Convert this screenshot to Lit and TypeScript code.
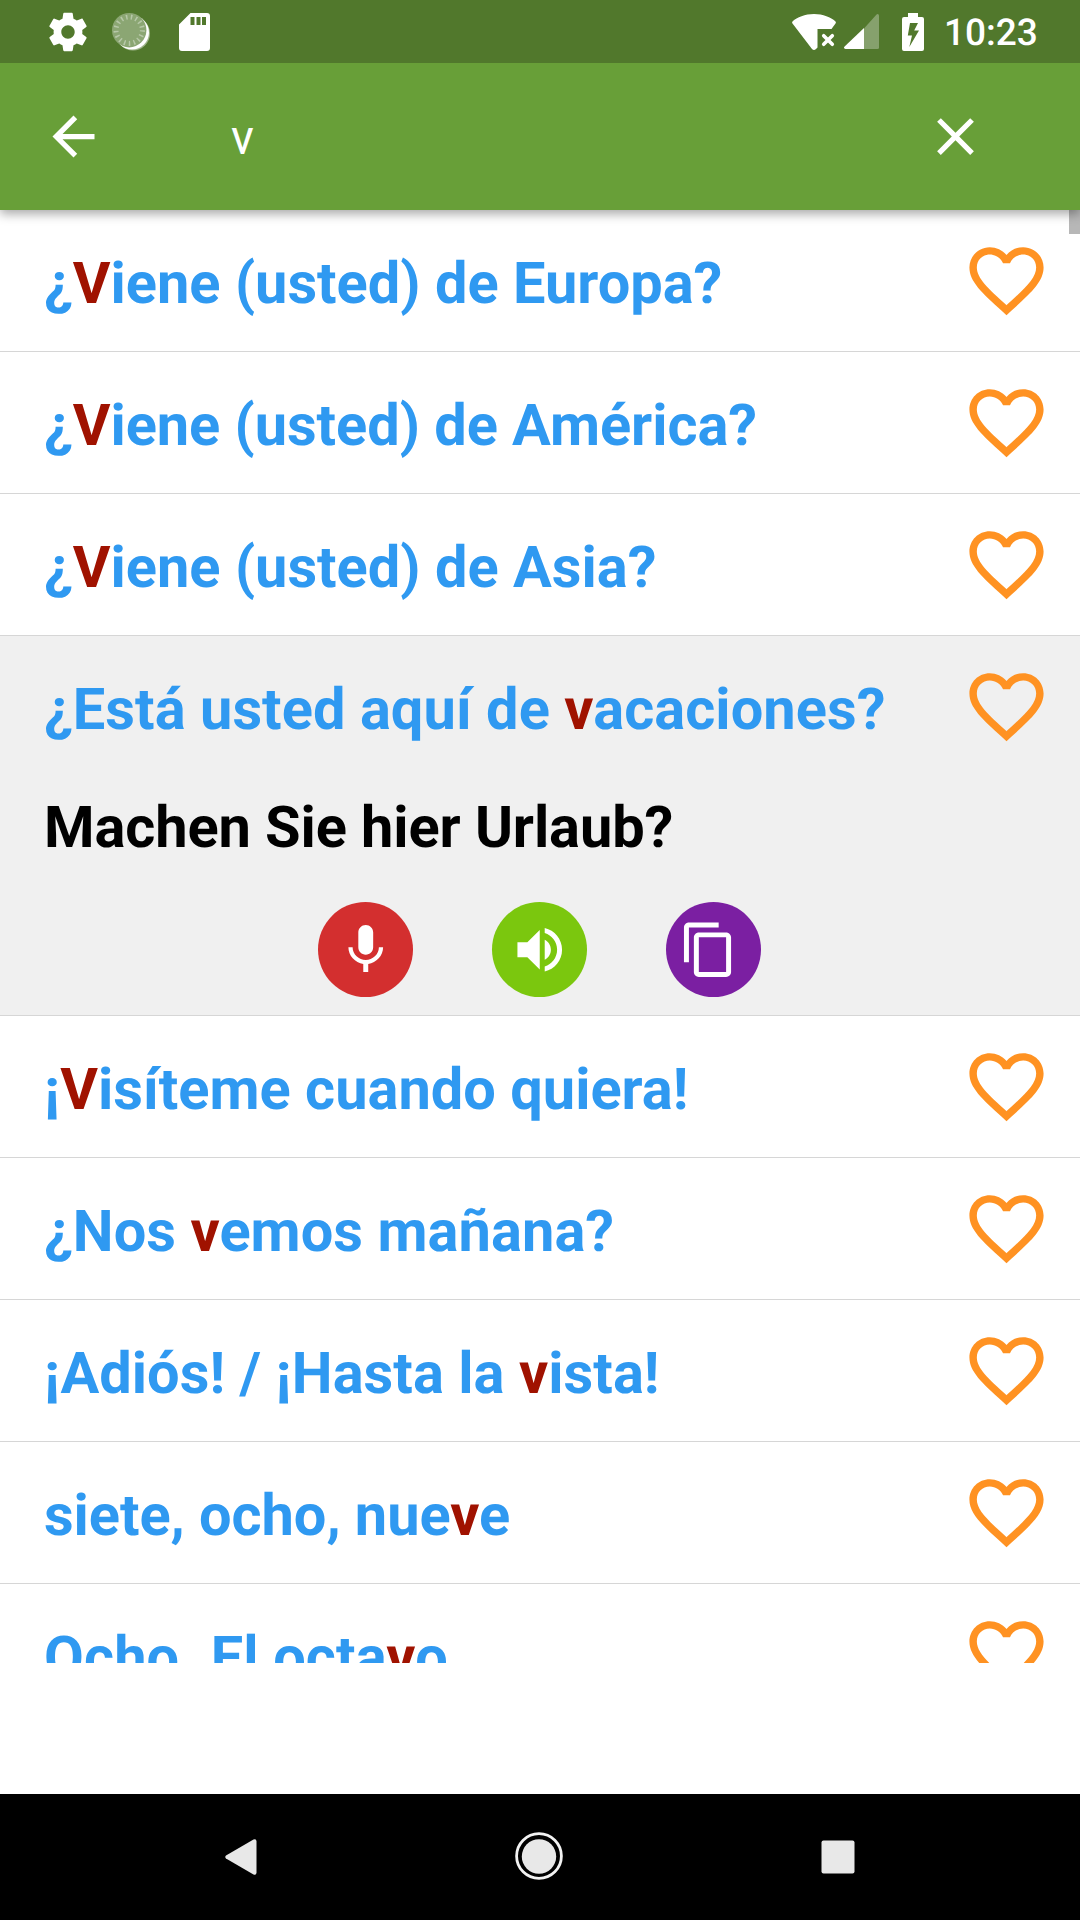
import { LitElement, html, svg, css, nothing } from "lit";
import { customElement, property, state } from "lit/decorators.js";
import { styleMap } from "lit/directives/style-map.js";

interface Phrase {
  text: string;
  translation?: string;
  /** Letter spacing in px for the phrase and for its translation. */
  tracking?: number;
  translationTracking?: number;
}

const PHRASES: Phrase[] = [
  { text: "¿Viene (usted) de Europa?" },
  { text: "¿Viene (usted) de América?", tracking: -0.05 },
  { text: "¿Viene (usted) de Asia?" },
  {
    text: "¿Está usted aquí de vacaciones?",
    tracking: 0.05,
    translation: "Machen Sie hier Urlaub?",
    translationTracking: -0.1,
  },
  { text: "¡Visíteme cuando quiera!" },
  { text: "¿Nos vemos mañana?", tracking: 0.06 },
  { text: "¡Adiós! / ¡Hasta la vista!", tracking: 0.05 },
  { text: "siete, ocho, nueve", tracking: -0.06 },
  { text: "Ocho. El octavo.", tracking: 0.12 },
];

const ICONS: Record<string, string> = {
  back: "M20 11H7.83l5.59-5.59L12 4l-8 8 8 8 1.41-1.41L7.83 13H20v-2z",
  close: "M19 6.41L17.59 5 12 10.59 6.41 5 5 6.41 10.59 12 5 17.59 6.41 19 12 13.41 17.59 19 19 17.59 13.41 12z",
  heart:
    "M16.5 3c-1.74 0-3.41.81-4.5 2.09C10.91 3.81 9.24 3 7.5 3 4.42 3 2 5.42 2 8.5c0 3.78 3.4 6.86 8.55 11.54L12 21.35l1.45-1.32C18.6 15.36 22 12.28 22 8.5 22 5.42 19.58 3 16.5 3zm-4.4 15.55l-.1.1-.11-.1C7.14 14.24 4 11.39 4 8.5 4 6.5 5.5 5 7.5 5c1.54 0 3.04.99 3.57 2.36h1.87C13.46 5.99 14.96 5 16.5 5c2 0 3.5 1.5 3.5 3.5 0 2.89-3.14 5.74-7.9 10.05z",
  mic: "M12 14c1.66 0 2.99-1.34 2.99-3L15 5c0-1.66-1.34-3-3-3S9 3.34 9 5v6c0 1.66 1.34 3 3 3zm5.3-3c0 3-2.54 5.1-5.3 5.1S6.7 14 6.7 11H5c0 3.41 2.72 6.23 6 6.72V21h2v-3.28c3.28-.48 6-3.3 6-6.72h-1.7z",
  speaker:
    "M3 9v6h4l5 5V4L7 9H3zm13.5 3c0-1.77-1.02-3.29-2.5-4.03v8.05c1.48-.73 2.5-2.25 2.5-4.02zM14 3.23v2.06c2.89.86 5 3.54 5 6.71s-2.11 5.85-5 6.71v2.06c4.01-.91 7-4.49 7-8.77s-2.99-7.86-7-8.77z",
  copy: "M16 1H4c-1.1 0-2 .9-2 2v14h2V3h12V1zm3 4H8c-1.1 0-2 .9-2 2v14c0 1.1.9 2 2 2h11c1.1 0 2-.9 2-2V7c0-1.1-.9-2-2-2zm0 16H8V7h11v14z",
  gear: "M19.43 12.98c.04-.32.07-.64.07-.98s-.03-.66-.07-.98l2.11-1.65c.19-.15.24-.42.12-.64l-2-3.46c-.12-.22-.39-.3-.61-.22l-2.49 1c-.52-.4-1.08-.73-1.69-.98l-.38-2.65C14.46 2.18 14.25 2 14 2h-4c-.25 0-.46.18-.49.42l-.38 2.65c-.61.25-1.17.59-1.69.98l-2.49-1c-.23-.09-.49 0-.61.22l-2 3.46c-.13.22-.07.49.12.64l2.11 1.65c-.04.32-.07.65-.07.98s.03.66.07.98l-2.11 1.65c-.19.15-.24.42-.12.64l2 3.46c.12.22.39.3.61.22l2.49-1c.52.4 1.08.73 1.69.98l.38 2.65c.03.24.24.42.49.42h4c.25 0 .46-.18.49-.42l.38-2.65c.61-.25 1.17-.59 1.69-.98l2.49 1c.23.09.49 0 .61-.22l2-3.46c.12-.22.07-.49-.12-.64l-2.11-1.65zM12 15.5c-1.93 0-3.5-1.57-3.5-3.5s1.57-3.5 3.5-3.5 3.5 1.57 3.5 3.5-1.57 3.5-3.5 3.5z",
};

const icon = (name: string) =>
  svg`<svg class="icon ${name}" viewBox="0 0 24 24"><path d=${ICONS[name]} /></svg>`;

const tracked = (px = 0) => styleMap({ letterSpacing: `${px}px` });

@customElement("status-bar")
export class StatusBar extends LitElement {
  static styles = css`
    :host {
      display: flex;
      align-items: center;
      justify-content: space-between;
      height: 63px;
      padding: 0 42px 0 45px;
      box-sizing: border-box;
      background: #51782c;
      color: #fff;
      position: relative;
      z-index: 2;
    }
    .side {
      display: flex;
      align-items: center;
    }
    svg {
      display: block;
      fill: #fff;
    }
    .gear {
      width: 46px;
      height: 46px;
    }
    .sync {
      width: 42px;
      height: 42px;
      margin-left: 19px;
    }
    .ticks {
      fill: none;
      stroke: #b7c8a8;
      stroke-width: 5;
      stroke-dasharray: 1.5 3.38;
    }
    .card {
      width: 31px;
      height: 38px;
      margin-left: 27px;
    }
    .wifi {
      width: 44px;
      height: 36px;
    }
    .signal {
      width: 35px;
      height: 35px;
      margin-left: 8px;
    }
    .battery {
      width: 22px;
      height: 38px;
      margin-left: 23px;
    }
    .time {
      width: 94px;
      margin: 4px 0 0 20px;
      font: 500 37px/44px Roboto, sans-serif;
      text-rendering: geometricPrecision;
    }
  `;

  render() {
    return html`
      <div class="side">
        ${icon("gear")}
        <svg class="sync" viewBox="0 0 42 42">
          <circle cx="23" cy="22.5" r="17" fill="#9fb58a" />
          <circle cx="22" cy="21.5" r="17" />
          <circle cx="19.2" cy="19.2" r="17.2" fill="#8ba673" />
          <circle class="ticks" cx="19.2" cy="19.2" r="13.2" />
        </svg>
        <svg class="card" viewBox="0 0 31 38">
          <path
            fill-rule="evenodd"
            d="M11.5 0H28q3 0 3 3v32q0 3-3 3H3q-3 0-3-3V11.500zM11.500 4v8h4V4zM17.500 4v8h4V4zM23 4v8h4V4z"
          />
        </svg>
      </div>
      <div class="side">
        <svg class="wifi" viewBox="0 0 44 36">
          <path d="M22 0C31 0 39 3.300 43.300 7.200Q44.400 8.400 43.500 9.500L39.500 15H25.500V33.500L24 35Q22 37 20 35L.500 9.500Q-.400 8.400 .700 7.200C5 3.300 13 0 22 0z" />
          <path d="M31.700 21.700l8.600 8.600M40.300 21.700l-8.600 8.600" stroke="#fff" stroke-width="3.600" stroke-linecap="round" />
        </svg>
        <svg class="signal" viewBox="0 0 35 35">
          <path fill="#86a16d" d="M20 14.600L32.300.700Q34-.700 35 1.300V33.500Q35 35 33.500 35H20z" />
          <path d="M20 14V35H1.500Q-1 34.500.600 32.500z" />
        </svg>
        <svg class="battery" viewBox="0 0 22 38">
          <path
            fill-rule="evenodd"
            d="M6 0H16V4H20Q22 4 22 6V36Q22 38 20 38H2Q0 38 0 36V6Q0 4 2 4H6zM8 10L5.800 22.500H10L7.300 34L17 17.500H12.200L16 10z"
          />
        </svg>
        <span class="time">10:23</span>
      </div>
    `;
  }
}

@customElement("search-bar")
export class SearchBar extends LitElement {
  @property() query = "";

  static styles = css`
    :host {
      display: flex;
      align-items: center;
      height: 147px;
      padding: 0 93px 0 42px;
      box-sizing: border-box;
      background: #689f38;
      box-shadow: 0 4px 10px rgba(0, 0, 0, 0.34);
      position: relative;
      z-index: 1;
    }
    .icon {
      flex: none;
      width: 63px;
      height: 63px;
      fill: #fff;
    }
    .query {
      flex: 1;
      padding: 3px 0 0 126px;
      color: #fff;
      font: 400 47.250px/56px Roboto, sans-serif;
    }
  `;

  render() {
    return html`${icon("back")}<span class="query">${this.query}</span>${icon("close")}`;
  }
}

@customElement("phrase-row")
export class PhraseRow extends LitElement {
  @property({ attribute: false }) phrase!: Phrase;
  @property() query = "";

  static styles = css`
    :host {
      display: block;
      border-bottom: 1px solid #d6d6d6;
      background: #fff;
      font: 700 57.750px/68px Roboto, sans-serif;
      text-rendering: geometricPrecision;
      white-space: nowrap;
    }
    :host([open]) {
      background: #f0f0f0;
    }
    .head {
      display: flex;
      align-items: flex-start;
      justify-content: space-between;
      height: 141px;
      padding: 0 29px 0 44px;
      box-sizing: border-box;
    }
    .title {
      padding-top: 40px;
      color: #2f99f1;
    }
    .hit {
      color: #a01200;
    }
    .heart {
      width: 89px;
      height: 89px;
      margin-top: 26px;
      fill: #ff9222;
    }
    .translation {
      padding: 17px 44px 0;
      color: #000;
    }
    .actions {
      display: flex;
      justify-content: center;
      gap: 79px;
      padding: 40px 1px 18px 0;
    }
    .action {
      display: flex;
      align-items: center;
      justify-content: center;
      width: 95px;
      height: 95px;
      border-radius: 50%;
    }
    .action .icon {
      width: 59.500px;
      height: 59.500px;
      fill: #fff;
    }
    .action .copy {
      margin-right: 9px;
    }
    .record {
      background: #d32f2f;
    }
    .listen {
      background: #7bc70e;
    }
    .duplicate {
      background: #7b1fa2;
    }
  `;

  private highlighted() {
    const { text } = this.phrase;
    const at = text.toLowerCase().indexOf(this.query.toLowerCase());
    if (!this.query || at < 0) return text;
    const end = at + this.query.length;
    return html`${text.slice(0, at)}<span class="hit">${text.slice(at, end)}</span>${text.slice(end)}`;
  }

  render() {
    const { translation, tracking, translationTracking } = this.phrase;
    return html`
      <div class="head">
        <span class="title" style=${tracked(tracking)}>${this.highlighted()}</span>
        ${icon("heart")}
      </div>
      ${translation
        ? html`
            <div class="translation" style=${tracked(translationTracking)}>${translation}</div>
            <div class="actions">
              <span class="action record">${icon("mic")}</span>
              <span class="action listen">${icon("speaker")}</span>
              <span class="action duplicate">${icon("copy")}</span>
            </div>
          `
        : nothing}
    `;
  }
}

@customElement("nav-bar")
export class NavBar extends LitElement {
  static styles = css`
    :host {
      display: flex;
      align-items: center;
      justify-content: space-between;
      height: 126px;
      padding: 0 225px;
      box-sizing: border-box;
      background: #000;
    }
    svg {
      display: block;
      fill: #e8e8e8;
    }
    .back {
      width: 32px;
      height: 36px;
    }
    .home {
      width: 48px;
      height: 48px;
      margin: -2px 0 0 0.500px;
    }
    .recent {
      width: 34px;
      height: 34px;
    }
    .ring {
      fill: none;
      stroke: #f2f2f2;
      stroke-width: 2.800;
    }
  `;

  render() {
    return html`
      <svg class="back" viewBox="0 0 32 36">
        <path d="M1 16.400L28.500.500Q31.500-.500 31.500 2.500V33.500Q31.500 36.500 28.500 35.500L1 19.600Q-.500 18 1 16.400z" />
      </svg>
      <svg class="home" viewBox="0 0 48 48">
        <circle class="ring" cx="24" cy="24" r="22.400" />
        <circle cx="24" cy="24.500" r="17.200" />
      </svg>
      <svg class="recent" viewBox="0 0 34 34"><rect x=".500" y=".500" width="33" height="33" rx="2" /></svg>
    `;
  }
}

@customElement("app-root")
export class AppRoot extends LitElement {
  @state() private query = "v";

  static styles = css`
    :host {
      display: flex;
      flex-direction: column;
      width: 1080px;
      height: 1920px;
      overflow: hidden;
      background: #fff;
    }
    .list {
      position: relative;
      height: 1453px;
      overflow: hidden;
    }
    .thumb {
      position: absolute;
      top: 0;
      right: 0;
      width: 11px;
      height: 24px;
      background: #b7b7b7;
    }
    .spacer {
      flex: 1;
    }
  `;

  render() {
    return html`
      <status-bar></status-bar>
      <search-bar .query=${this.query}></search-bar>
      <div class="list">
        ${PHRASES.map(
          (p) => html`<phrase-row .phrase=${p} .query=${this.query} ?open=${!!p.translation}></phrase-row>`,
        )}
        <div class="thumb"></div>
      </div>
      <div class="spacer"></div>
      <nav-bar></nav-bar>
    `;
  }
}
